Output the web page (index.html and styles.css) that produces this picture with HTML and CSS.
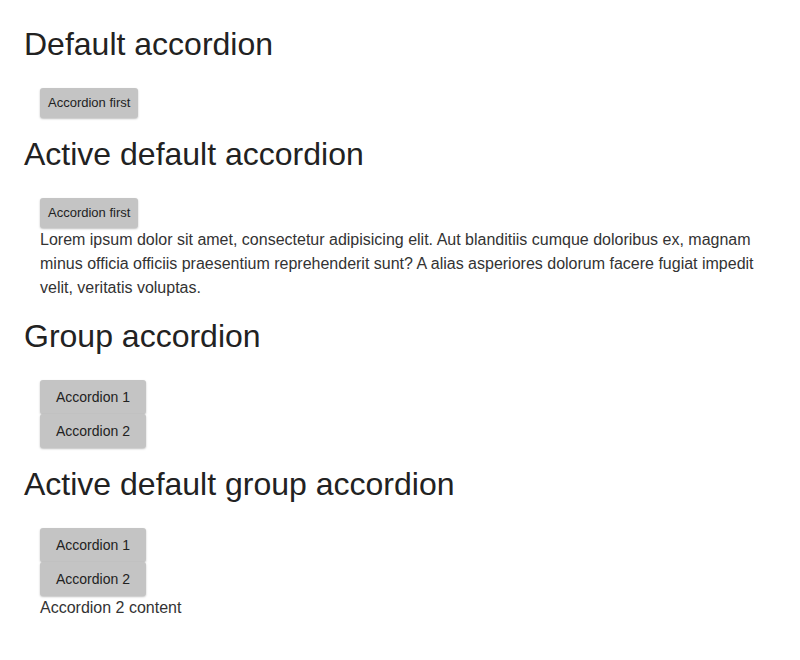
FILE: index.html
```html
<!DOCTYPE html>
<html>
<head>
<meta charset="utf-8">
<link rel="stylesheet" href="styles.css">
</head>
<body>
<main class="page">
  <section class="demo">
    <h1 class="demo-title">Default accordion</h1>
    <div class="accordion">
      <button class="acc-btn acc-btn-sm">Accordion first</button>
    </div>
  </section>
  <section class="demo">
    <h1 class="demo-title">Active default accordion</h1>
    <div class="accordion">
      <button class="acc-btn acc-btn-sm">Accordion first</button>
      <p class="acc-content">Lorem ipsum dolor sit amet, consectetur adipisicing elit. Aut blanditiis cumque doloribus ex, magnam minus officia officiis praesentium reprehenderit sunt? A alias asperiores dolorum facere fugiat impedit velit, veritatis voluptas.</p>
    </div>
  </section>
  <section class="demo">
    <h1 class="demo-title">Group accordion</h1>
    <div class="accordion">
      <button class="acc-btn">Accordion 1</button>
      <button class="acc-btn">Accordion 2</button>
    </div>
  </section>
  <section class="demo">
    <h1 class="demo-title">Active default group accordion</h1>
    <div class="accordion">
      <button class="acc-btn">Accordion 1</button>
      <button class="acc-btn">Accordion 2</button>
      <p class="acc-content">Accordion 2 content</p>
    </div>
  </section>
</main>
</body>
</html>
```

FILE: styles.css
```css
html, body {
  margin: 0;
  padding: 0;
  background: #ffffff;
}

body {
  font-family: "Liberation Sans", Arial, sans-serif;
  color: #333333;
}

.page {
  padding: 7px 24px 0;
}

.demo-title {
  margin: 19px 0 0;
  font-size: 32px;
  font-weight: 400;
  line-height: 37px;
  color: #222222;
}

.demo + .demo .demo-title {
  margin-top: 18px;
}

.accordion {
  display: flex;
  flex-direction: column;
  align-items: flex-start;
  margin: 25px 0 0 16px;
}

.acc-btn {
  display: block;
  box-sizing: border-box;
  height: 34px;
  padding: 0 16px;
  border: none;
  border-radius: 3px;
  background: #c4c4c4;
  box-shadow: 0 1px 2px rgba(0, 0, 0, 0.25);
  font-family: "Liberation Sans", Arial, sans-serif;
  font-size: 14px;
  color: #222222;
  line-height: 34px;
}

.acc-btn-sm {
  height: 30px;
  padding: 0 8px;
  font-size: 13px;
  line-height: 30px;
}

.acc-content {
  margin: 0;
  font-size: 16px;
  line-height: 24px;
  color: #333333;
}
```
